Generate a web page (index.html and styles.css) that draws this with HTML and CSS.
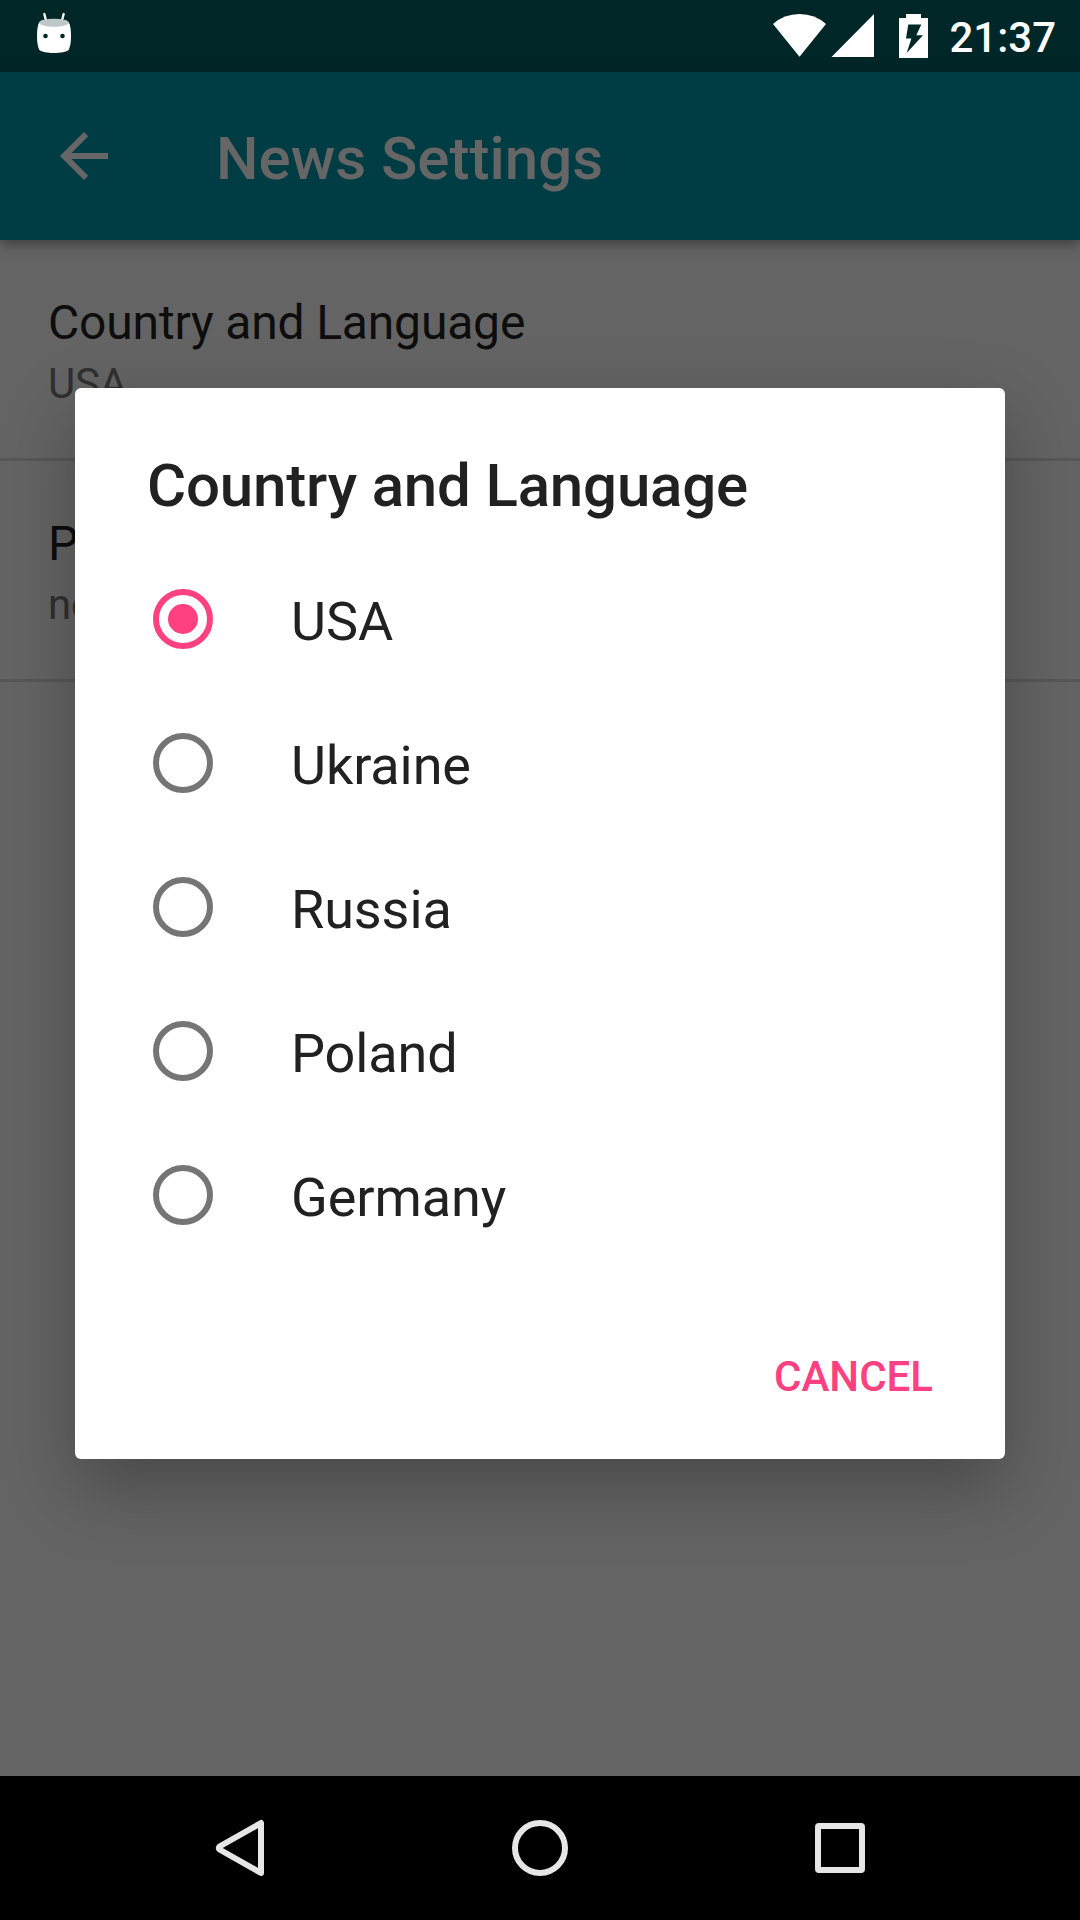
FILE: index.html
```html
<!DOCTYPE html>
<html lang="en">
<head>
<meta charset="utf-8">
<title>News Settings</title>
<link rel="stylesheet" href="styles.css">
</head>
<body>
<div class="screen">
  <header class="status">
    <svg class="mascot" width="36" height="42" viewBox="36 12 36 42">
      <path d="M44.300 14l2 7.500M63.700 14l-2 7.500" stroke="#fff" stroke-width="2.300" stroke-linecap="round"/>
      <path d="M39.500 22h29c2 3 2.500 8 2.500 14 0 8-1.300 12-2.500 14-2 2-8 3-14.500 3s-12.500-1-14.500-3c-1.200-2-2.500-6-2.500-14 0-6 .5-11 2.500-14z" fill="#fff"/>
      <ellipse cx="54" cy="22.700" rx="14.800" ry="4" fill="#bdc7c8"/>
      <circle cx="45.500" cy="36" r="2.300" fill="#002627"/><circle cx="62.500" cy="36" r="2.300" fill="#002627"/>
    </svg>
    <div class="status-right">
      <svg width="156" height="46" viewBox="772 13 156 46" fill="#fff">
        <path d="M799.500 56.700L773 24Q784 14 799.500 14T826 24z"/>
        <path d="M831.500 57H874V14z"/>
        <path fill-rule="evenodd" d="M906 14h15v4h7v40h-29V18h7zM908.300 24.600L906 38.600h5.400L906.700 53l16.300-17.700h-6.700l5-10.700z"/>
      </svg>
      <span class="clock">21:37</span>
    </div>
  </header>
  <div class="toolbar">
    <svg width="72" height="72" viewBox="0 0 24 24" fill="#666"><path d="M20 11H7.830l5.590-5.590L12 4l-8 8 8 8 1.410-1.410L7.830 13H20z"/></svg>
    <h1 class="toolbar-title">News Settings</h1>
  </div>
  <main class="prefs">
    <section class="pref"><div class="pref-title">Country and Language</div><div class="pref-value">USA</div></section>
    <section class="pref"><div class="pref-title">P</div><div class="pref-value">ne</div></section>
  </main>
  <nav class="navbar">
    <svg width="60" height="60" viewBox="0 0 60 60"><path d="M51 5v50L9.500 31.500q-1.500-1.500 0-3z"/></svg>
    <svg width="60" height="60" viewBox="0 0 60 60"><circle cx="30" cy="30" r="25"/></svg>
    <svg width="60" height="60" viewBox="0 0 60 60"><rect x="8" y="8" width="44" height="44" rx="1"/></svg>
  </nav>
  <div class="dialog" role="dialog">
    <h2 class="dialog-title">Country and Language</h2>
    <ul class="options">
      <li class="option"><span class="radio checked"></span><span class="label">USA</span></li>
      <li class="option"><span class="radio"></span><span class="label">Ukraine</span></li>
      <li class="option"><span class="radio"></span><span class="label">Russia</span></li>
      <li class="option"><span class="radio"></span><span class="label">Poland</span></li>
      <li class="option"><span class="radio"></span><span class="label">Germany</span></li>
    </ul>
    <div class="actions"><button class="cancel">CANCEL</button></div>
  </div>
</div>
</body>
</html>
```
FILE: styles.css
```css
* { box-sizing: border-box; }
body { margin: 0; font-family: Roboto, "Liberation Sans", sans-serif; }
h1, h2, ul { margin: 0; padding: 0; }
h1, h2 { font-weight: 500; }
svg { display: block; flex: none; }
.screen {
  position: relative;
  display: flex;
  flex-direction: column;
  width: 1080px;
  height: 1920px;
  overflow: hidden;
  background: #646464;
}
.status {
  display: flex;
  justify-content: space-between;
  height: 72px;
  padding: 12px 24px 0 36px;
  background: #002627;
}
.status-right { display: flex; gap: 21px; padding-top: 1px; }
.clock { font-size: 42px; font-weight: 500; line-height: 50px; color: #fff; }
.toolbar {
  display: flex;
  align-items: center;
  gap: 96px;
  height: 168px;
  padding-left: 48px;
  background: #003c43;
  box-shadow: 0 4px 12px rgba(0, 0, 0, .4);
}
.toolbar-title { font-size: 60px; line-height: 70px; padding-top: 5px; color: #666; }
.prefs { flex: 1; }
.pref { height: 221px; padding: 54px 48px 0; border-bottom: 3px solid #575757; }
.pref-title { font-size: 48px; line-height: 57px; letter-spacing: -.17px; color: #0d0d0d; }
.pref-value { font-size: 42px; line-height: 49px; padding-top: 8px; letter-spacing: -.2px; color: #303030; }
.navbar {
  display: flex;
  justify-content: center;
  align-items: center;
  gap: 240px;
  height: 144px;
  background: #000;
}
.navbar svg { fill: none; stroke: #e6e6e6; stroke-width: 6; stroke-linejoin: round; }
.dialog {
  position: absolute;
  left: 75px;
  top: 388px;
  width: 930px;
  height: 1071px;
  padding: 63px 72px 0;
  border-radius: 6px;
  background: #fff;
  box-shadow: 0 28px 72px rgba(0, 0, 0, .28);
}
.dialog-title { font-size: 60px; line-height: 70px; letter-spacing: -.17px; color: #212121; }
.options { list-style: none; padding-top: 26px; }
.option { display: flex; align-items: center; gap: 78px; height: 144px; padding-left: 6px; }
.label { font-size: 54px; line-height: 64px; padding-top: 6px; letter-spacing: -.1px; color: #212121; }
.radio {
  display: flex;
  align-items: center;
  justify-content: center;
  width: 60px;
  height: 60px;
  border: 6px solid #757575;
  border-radius: 50%;
}
.checked { border-color: #ff4081; }
.checked::after { content: ""; width: 30px; height: 30px; border-radius: 50%; background: #ff4081; }
.actions { display: flex; justify-content: flex-end; padding-top: 85px; }
.cancel {
  padding: 0;
  border: 0;
  background: none;
  font: 500 42px/49px Roboto, "Liberation Sans", sans-serif;
  color: #ff4081;
}
```
